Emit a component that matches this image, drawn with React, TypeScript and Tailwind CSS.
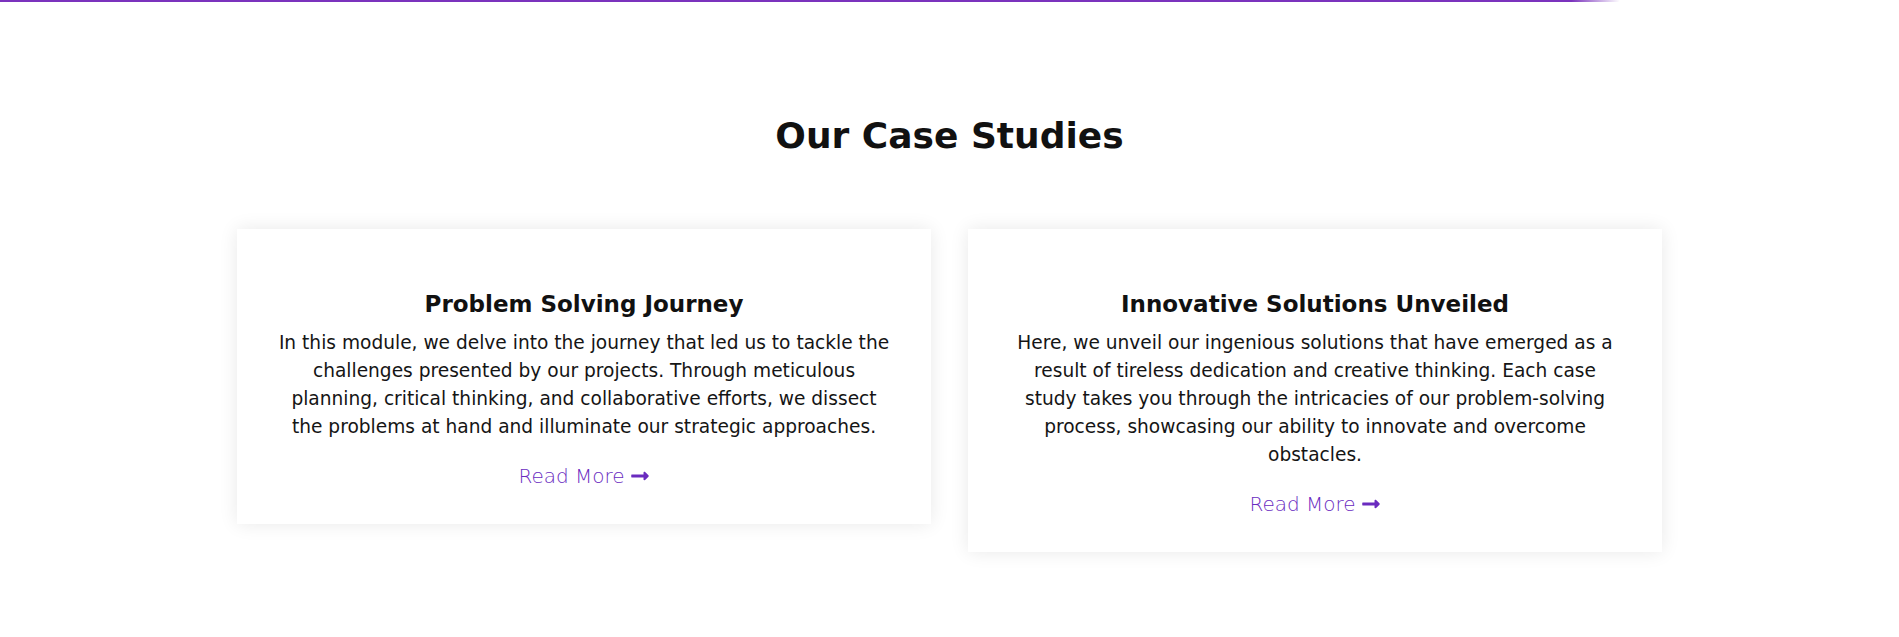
import React from "react";
import { FaLongArrowAltRight } from "react-icons/fa";

const casos = [
  {
    titulo: "Problem Solving Journey",
    texto:
      "In this module, we delve into the journey that led us to tackle the challenges presented by our projects. Through meticulous planning, critical thinking, and collaborative efforts, we dissect the problems at hand and illuminate our strategic approaches.",
  },
  {
    titulo: "Innovative Solutions Unveiled",
    texto:
      "Here, we unveil our ingenious solutions that have emerged as a result of tireless dedication and creative thinking. Each case study takes you through the intricacies of our problem-solving process, showcasing our ability to innovate and overcome obstacles.",
  },
];

const App: React.FC = () => {
  return (
    <div className="min-h-[637px] bg-white font-['DejaVu_Sans',sans-serif] text-[#111]">
      {/* línea superior del header */}
      <div className="h-[2px] w-[1620px] rounded-br-full bg-linear-to-r from-[#7b33bd] from-[97%] to-transparent" />

      <section className="pt-[112px]">
        <h2 className="text-center text-[36px] font-bold leading-[43px]">Our Case Studies</h2>

        {/* tarjetas */}
        <div className="mt-[72px] flex items-start justify-center gap-[37px]">
          {casos.map((c) => (
            <div
              key={c.titulo}
              className="w-[694px] bg-white px-10 pt-[60px] pb-[34px] text-center shadow-[0_0_18px_rgba(0,0,0,0.09)]"
            >
              <h3 className="text-[23px] font-bold leading-[30px]">{c.titulo}</h3>
              <p className="mt-[10px] text-[18.6px] leading-[28px] text-[#151515]">{c.texto}</p>
              <a
                href="#"
                className="mt-[21px] inline-flex items-center gap-[5px] text-[20px] font-light leading-[28px] text-[#6a2bbf]"
              >
                Read More
                <FaLongArrowAltRight className="text-[20px]" />
              </a>
            </div>
          ))}
        </div>
      </section>
    </div>
  );
};

export default App;
